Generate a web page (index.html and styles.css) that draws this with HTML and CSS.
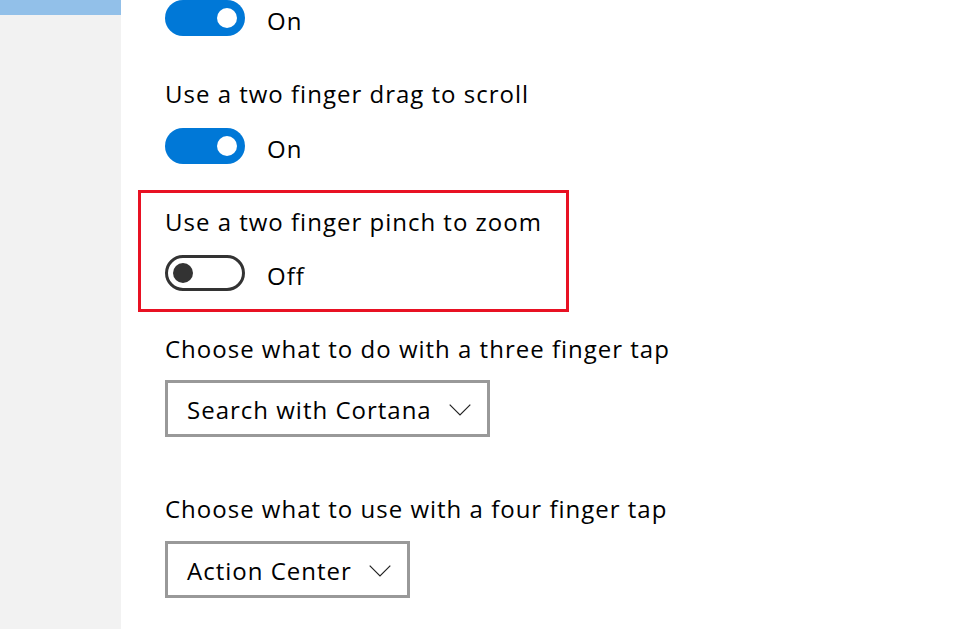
FILE: index.html
```html
<!DOCTYPE html>
<html lang="en">
<head>
<meta charset="utf-8">
<title>Touchpad settings</title>
<link rel="stylesheet" href="styles.css">
</head>
<body>
<div class="app">
  <aside class="sidebar">
    <div class="sidebar-active"></div>
  </aside>
  <main class="content">
    <div class="toggle-row first">
      <span class="toggle on"><span class="knob"></span></span>
      <span class="state">On</span>
    </div>

    <div class="label l2">Use a two finger drag to scroll</div>
    <div class="toggle-row t2">
      <span class="toggle on"><span class="knob"></span></span>
      <span class="state">On</span>
    </div>

    <div class="highlight">
      <div class="label">Use a two finger pinch to zoom</div>
      <div class="toggle-row">
        <span class="toggle off"><span class="knob"></span></span>
        <span class="state">Off</span>
      </div>
    </div>

    <div class="label l3">Choose what to do with a three finger tap</div>
    <div class="dropdown d1">
      <span class="dd-text">Search with Cortana</span>
      <svg class="chev" width="22" height="12" viewBox="0 0 22 12"><path d="M0.7 0.7 L11 11 L21.3 0.7" fill="none" stroke="#222" stroke-width="1.2"/></svg>
    </div>

    <div class="label l4">Choose what to use with a four finger tap</div>
    <div class="dropdown d2">
      <span class="dd-text">Action Center</span>
      <svg class="chev" width="22" height="12" viewBox="0 0 22 12"><path d="M0.7 0.7 L11 11 L21.3 0.7" fill="none" stroke="#222" stroke-width="1.2"/></svg>
    </div>
  </main>
</div>
</body>
</html>
```

FILE: styles.css
```css
* { box-sizing: border-box; }
html, body { margin: 0; padding: 0; background: #fff; }
body {
  font-family: "Open Sans", "Noto Sans", "Liberation Sans", sans-serif;
  font-size: 24px;
  letter-spacing: 1px;
  color: #000;
  width: 970px;
  height: 629px;
  overflow: hidden;
}
.app { display: flex; height: 629px; }
.sidebar {
  width: 121px;
  flex: none;
  background: #f2f2f2;
}
.sidebar-active { height: 15px; background: #92c0e9; }
.content {
  flex: 1;
  padding-left: 44px;
  display: flex;
  flex-direction: column;
  align-items: flex-start;
}
.label {
  line-height: 32px;
  height: 32px;
  white-space: nowrap;
}
.toggle-row {
  display: flex;
  align-items: flex-start;
  height: 36px;
}
.l2 { margin-top: 42px; }
.t2 { margin-top: 18px; }
.toggle {
  width: 80px;
  height: 36px;
  border-radius: 18px;
  position: relative;
  flex: none;
}
.toggle.on { background: #0078d7; }
.toggle.off { border: 3px solid #333; background: #fff; }
.knob {
  position: absolute;
  width: 20px;
  height: 20px;
  border-radius: 50%;
  top: 8px;
}
.toggle.on .knob { background: #fff; right: 8px; }
.toggle.off .knob { background: #333; left: 5px; top: 5px; }
.state {
  margin-left: 22px;
  line-height: 36px;
  padding-top: 3px;
}
.highlight {
  margin-top: 26px;
  margin-left: -27px;
  width: 431px;
  height: 122px;
  border: 3px solid #e81123;
  padding: 13px 0 0 24px;
}
.highlight .toggle-row { margin-top: 17px; }
.l3 { margin-top: 21px; }
.dropdown {
  height: 57px;
  border: 3px solid #999;
  display: flex;
  align-items: center;
  padding: 0 16px 0 19px;
}
.d1 { margin-top: 15px; }
.d2 { margin-top: 16px; }
.dd-text { line-height: 32px; padding-top: 2px; }
.chev { margin-left: 17px; margin-top: 2px; }
.l4 { margin-top: 56px; }
```
